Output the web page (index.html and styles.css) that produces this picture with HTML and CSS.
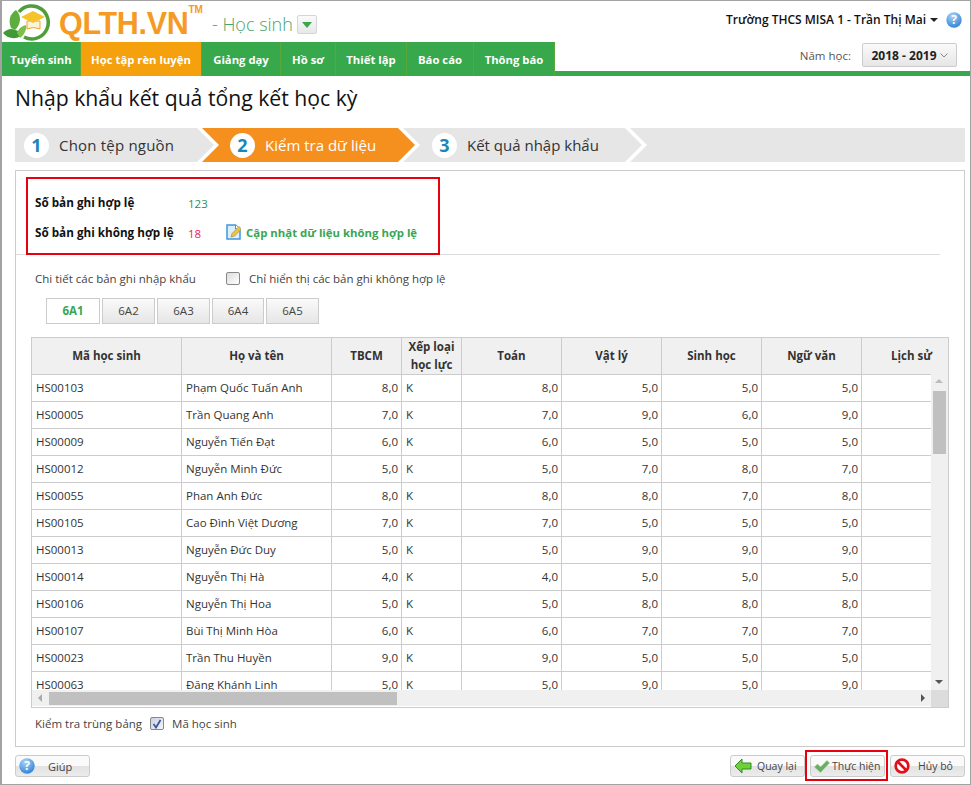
FILE: index.html
```html
<!DOCTYPE html>
<html lang="vi">
<head>
<meta charset="utf-8">
<title>Nhập khẩu kết quả tổng kết học kỳ</title>
<link rel="stylesheet" href="styles.css">
</head>
<body>
<div class="frame">
  <header class="top">
    <div class="brand">
      <svg class="logo" viewBox="0 0 52 40" width="52" height="40">
        <path d="M17 10 A16.500 16.500 0 1 1 22 35" fill="none" stroke="#4f9e3a" stroke-width="3.500"/>
        <path d="M25 19 H38 V27 Q31.500 24 25 27Z" fill="#fdf3d8" stroke="#eaa52a"/>
        <polygon points="31,9 43,15 31,21 19,15" fill="#f5c42a"/>
        <path d="M1 31 C7 25 14 26 20 33 C14 38 6 37 1 31Z" fill="#3f9a35"/>
        <path d="M9 26 C6 18 8 12 14 8 C20 14 19 22 13 28Z" fill="#5dae3e"/>
        <path d="M15 31 C17 26 20 24 24 23 C25 28 22 33 18 36Z" fill="#7cc04b"/>
      </svg>
      <span class="brand-name">QLTH.VN</span><sup class="brand-tm">TM</sup>
      <span class="module">- Học sinh</span>
      <span class="module-btn"><span class="tri-green"></span></span>
    </div>
    <div class="user">
      <span>Trường THCS MISA 1 - Trần Thị Mai</span>
      <span class="caret"></span>
      <svg class="help" viewBox="0 0 16 16" width="16" height="16"><defs><radialGradient id="hg" cx="40%" cy="25%" r="80%"><stop offset="0" stop-color="#a9d4f7"/><stop offset="1" stop-color="#2f7fd6"/></radialGradient></defs><circle cx="8" cy="8" r="7.700" fill="url(#hg)"/><text x="8" y="12" text-anchor="middle" class="help-q">?</text></svg>
    </div>
  </header>
  <nav class="nav">
    <div class="tabs">
      <a class="tab">Tuyển sinh</a>
      <a class="tab tab-active">Học tập rèn luyện</a>
      <a class="tab">Giảng dạy</a>
      <a class="tab">Hồ sơ</a>
      <a class="tab">Thiết lập</a>
      <a class="tab">Báo cáo</a>
      <a class="tab">Thông báo</a>
    </div>
    <div class="year">
      <span class="year-label">Năm học:</span>
      <span class="year-btn">2018 - 2019 <svg viewBox="0 0 8 5" width="8" height="5"><path d="M.5.5 4 4 7.500.5" fill="none" stroke="#888"/></svg></span>
    </div>
  </nav>
  <h1 class="title">Nhập khẩu kết quả tổng kết học kỳ</h1>
  <div class="steps">
    <div class="step step-1"><b class="num">1</b>Chọn tệp nguồn</div>
    <div class="step step-2"><b class="num">2</b>Kiểm tra dữ liệu</div>
    <div class="step step-3"><b class="num">3</b>Kết quả nhập khẩu</div>
    <div class="step step-4"></div>
  </div>
  <main class="panel">
    <div class="summary-wrap">
      <div class="summary">
        <div class="sum-row"><b class="sum-label">Số bản ghi hợp lệ</b><span class="ok">123</span></div>
        <div class="sum-row"><b class="sum-label">Số bản ghi không hợp lệ</b><span class="bad">18</span>
          <svg class="edit" viewBox="0 0 15 16" width="15" height="16"><path d="M1 1H9.500L14 5V15H1Z" fill="#dcedfb" stroke="#3f97e0" stroke-width="1.500"/><path d="M9.500 1V5H14" fill="#fff" stroke="#3f97e0"/><path d="M5 13 6 9.500 13 2.500 15.500 5 8.500 12Z" fill="#eec543" stroke="#a97f1d" stroke-width=".6"/></svg>
          <b class="link">Cập nhật dữ liệu không hợp lệ</b></div>
      </div>
    </div>
    <div class="detail">
      <span class="detail-label">Chi tiết các bản ghi nhập khẩu</span>
      <span class="check"></span>
      <span class="detail-opt">Chỉ hiển thị các bản ghi không hợp lệ</span>
    </div>
    <div class="classes">
      <a class="cls cls-active">6A1</a><a class="cls">6A2</a><a class="cls">6A3</a><a class="cls">6A4</a><a class="cls">6A5</a>
    </div>
    <div class="grid">
      <table>
        <colgroup><col class="c-id"><col class="c-name"><col class="c-avg"><col class="c-rank"><col class="c-sub"><col class="c-sub"><col class="c-sub"><col class="c-sub"><col class="c-sub"></colgroup>
        <thead><tr><th>Mã học sinh</th><th>Họ và tên</th><th>TBCM</th><th>Xếp loại<br>học lực</th><th>Toán</th><th>Vật lý</th><th>Sinh học</th><th>Ngữ văn</th><th>Lịch sử</th></tr></thead>
        <tbody>
          <tr><td>HS00103</td><td>Phạm Quốc Tuấn Anh</td><td class="n">8,0</td><td>K</td><td class="n">8,0</td><td class="n">5,0</td><td class="n">5,0</td><td class="n">5,0</td><td></td></tr>
          <tr><td>HS00005</td><td>Trần Quang Anh</td><td class="n">7,0</td><td>K</td><td class="n">7,0</td><td class="n">9,0</td><td class="n">6,0</td><td class="n">9,0</td><td></td></tr>
          <tr><td>HS00009</td><td>Nguyễn Tiến Đạt</td><td class="n">6,0</td><td>K</td><td class="n">6,0</td><td class="n">5,0</td><td class="n">5,0</td><td class="n">5,0</td><td></td></tr>
          <tr><td>HS00012</td><td>Nguyễn Minh Đức</td><td class="n">5,0</td><td>K</td><td class="n">5,0</td><td class="n">7,0</td><td class="n">8,0</td><td class="n">7,0</td><td></td></tr>
          <tr><td>HS00055</td><td>Phan Anh Đức</td><td class="n">8,0</td><td>K</td><td class="n">8,0</td><td class="n">8,0</td><td class="n">7,0</td><td class="n">8,0</td><td></td></tr>
          <tr><td>HS00105</td><td>Cao Đình Việt Dương</td><td class="n">7,0</td><td>K</td><td class="n">7,0</td><td class="n">5,0</td><td class="n">5,0</td><td class="n">5,0</td><td></td></tr>
          <tr><td>HS00013</td><td>Nguyễn Đức Duy</td><td class="n">5,0</td><td>K</td><td class="n">5,0</td><td class="n">9,0</td><td class="n">9,0</td><td class="n">9,0</td><td></td></tr>
          <tr><td>HS00014</td><td>Nguyễn Thị Hà</td><td class="n">4,0</td><td>K</td><td class="n">4,0</td><td class="n">5,0</td><td class="n">5,0</td><td class="n">5,0</td><td></td></tr>
          <tr><td>HS00106</td><td>Nguyễn Thị Hoa</td><td class="n">5,0</td><td>K</td><td class="n">5,0</td><td class="n">8,0</td><td class="n">8,0</td><td class="n">8,0</td><td></td></tr>
          <tr><td>HS00107</td><td>Bùi Thị Minh Hòa</td><td class="n">6,0</td><td>K</td><td class="n">6,0</td><td class="n">7,0</td><td class="n">7,0</td><td class="n">7,0</td><td></td></tr>
          <tr><td>HS00023</td><td>Trần Thu Huyền</td><td class="n">9,0</td><td>K</td><td class="n">9,0</td><td class="n">5,0</td><td class="n">5,0</td><td class="n">5,0</td><td></td></tr>
          <tr><td>HS00063</td><td>Đặng Khánh Linh</td><td class="n">5,0</td><td>K</td><td class="n">5,0</td><td class="n">9,0</td><td class="n">5,0</td><td class="n">9,0</td><td></td></tr>
        </tbody>
      </table>
      <div class="vbar"><span class="arr arr-up"></span><span class="vthumb"></span><span class="arr arr-down"></span></div>
      <div class="hbar"><span class="arr arr-left"></span><span class="hthumb"></span><span class="arr arr-right"></span></div>
      <div class="corner"></div>
    </div>
    <div class="dupes">
      <span>Kiểm tra trùng bảng</span>
      <span class="check check-on"><svg viewBox="0 0 10 10" width="10" height="10"><path d="M1.500 5 4 8.500 8.500 1" fill="none" stroke="#3b5a9a" stroke-width="1.800"/></svg></span>
      <span>Mã học sinh</span>
    </div>
  </main>
  <footer class="actions">
    <button class="btn btn-help"><svg viewBox="0 0 16 16" width="16" height="16"><circle cx="8" cy="8" r="7.700" fill="url(#hg)"/><text x="8" y="12" text-anchor="middle" class="help-q">?</text></svg><span>Giúp</span></button>
    <div class="actions-right">
      <button class="btn btn-back"><svg viewBox="0 0 18 16" width="18" height="16"><path d="M8 1 1 8 8 15V11H17V5H8Z" fill="#6fd03c" stroke="#2f8f1e"/></svg><span>Quay lại</span></button>
      <div class="focus"><button class="btn btn-go"><svg viewBox="0 0 16 13" width="16" height="13"><path d="M.5 7 3.500 4 6.500 7 13 .5 15.500 3 6.500 12.500Z" fill="#69ae62" stroke="#9ccb96" stroke-width=".5"/></svg><span>Thực hiện</span></button></div>
      <button class="btn btn-cancel"><svg viewBox="0 0 16 16" width="16" height="16"><circle cx="8" cy="8" r="6.300" fill="#fff" stroke="#e0101a" stroke-width="2.700"/><path d="M3.500 3.500 12.500 12.500" stroke="#e0101a" stroke-width="2.700"/></svg><span>Hủy bỏ</span></button>
    </div>
  </footer>
</div>
</body>
</html>
```
FILE: styles.css
```css
* { box-sizing: border-box; }
html, body { margin: 0; padding: 0; background: #fff; }
body { font-family: "Open Sans", "Noto Sans", sans-serif; font-size: 11.500px; color: #222; }
button { font: inherit; }
a { display: block; }

.frame {
  width: 971px; height: 785px; overflow: hidden;
  border: solid #a3a3a3; border-width: 1px 1px 1px 2px;
  display: flex; flex-direction: column;
}

/* header */
.top { height: 41px; display: flex; justify-content: space-between; align-items: flex-start; flex: none; }
.brand { display: flex; align-items: flex-start; height: 41px; }
.logo { margin-top: 1px; flex: none; }
.brand-name { font-family: "Liberation Sans", sans-serif; font-weight: 700; font-size: 30.500px; line-height: 40px; color: #f59a23; margin: 2px 0 0 5px; letter-spacing: -.3px; }
.brand-tm { font-family: "Liberation Sans", sans-serif; font-weight: 700; font-size: 10px; line-height: 12px; color: #f59a23; margin: 3px 0 0 0; vertical-align: baseline; }
.module { font-size: 18px; color: #4aa56a; margin: 11px 0 0 9px; line-height: 24px; font-family: "Open Sans", sans-serif; font-weight: 300; }
.module-btn { width: 20px; height: 19px; margin: 14px 0 0 4px; border: 1px solid #d5d5d5; border-radius: 2px; background: linear-gradient(#fafafa, #e8e8e8); display: flex; align-items: center; justify-content: center; }
.tri-green { width: 0; height: 0; border: 5px solid transparent; border-top: 6px solid #39a84c; border-bottom: 0; }
.user { display: flex; align-items: center; height: 17px; margin: 10px 8px 0 0; color: #111; font-weight: 600; font-size: 12px; }
.caret { width: 0; height: 0; border: 4px solid transparent; border-top: 4px solid #222; border-bottom: 0; margin-left: 4px; }
.help { margin-left: 8px; }
.help-q { font-size: 12px; font-weight: 700; fill: #fff; }

/* nav */
.nav { height: 34px; flex: none; display: flex; justify-content: space-between; border-bottom: 5px solid #37a84c; }
.tabs { display: flex; height: 34px; }
.tab { height: 34px; line-height: 35px; text-align: center; background: #37a84c; color: #fff; font-weight: 700; font-size: 11.300px; border-right: 1px solid #5aa83a; white-space: nowrap; }
.tab:nth-child(1) { width: 79px; }
.tab:nth-child(2) { width: 121px; }
.tab:nth-child(3) { width: 79px; }
.tab:nth-child(4) { width: 55px; }
.tab:nth-child(5) { width: 71px; }
.tab:nth-child(6) { width: 67px; }
.tab:nth-child(7) { width: 81px; }
.tab-active { background: #f5a00d; }
.year { display: flex; align-items: flex-start; height: 29px; margin-right: 13px; }
.year-label { line-height: 28px; color: #555; margin-right: 11px; }
.year-btn { margin-top: 1px; height: 24px; width: 95px; border: 1px solid #ccc; border-radius: 2px; background: linear-gradient(#fafafa, #e6e6e6); font-weight: 700; color: #222; font-size: 12px; display: flex; align-items: center; justify-content: center; gap: 3px; }

/* title */
.title { margin: 0; height: 52px; padding: 7px 0 0 13px; font-weight: 400; font-size: 21.200px; line-height: 30px; color: #111; flex: none; }

/* steps */
.steps { display: flex; height: 34px; margin-left: 13px; width: 950px; flex: none; font-size: 15px; color: #333; }
.step { height: 34px; background: #e6e6e6; display: flex; align-items: center; flex: none; }
.step-1 { width: 199px; padding-left: 9px; letter-spacing: .2px; clip-path: polygon(0 0, calc(100% - 17px) 0, 100% 50%, calc(100% - 17px) 100%, 0 100%); }
.step-2 { width: 213px; margin-left: -12px; padding-left: 28px; background: #f5901e; color: #fff; clip-path: polygon(0 0, calc(100% - 17px) 0, 100% 50%, calc(100% - 17px) 100%, 0 100%, 17px 50%); }
.step-3 { width: 239px; margin-left: -12px; padding-left: 29px; clip-path: polygon(0 0, calc(100% - 17px) 0, 100% 50%, calc(100% - 17px) 100%, 0 100%, 17px 50%); }
.step-4 { flex: 1; margin-left: -12px; clip-path: polygon(0 0, 100% 0, 100% 100%, 0 100%, 17px 50%); }
.num { width: 25px; height: 25px; border-radius: 50%; background: #fff; color: #1b86b8; font-size: 18px; line-height: 25px; text-align: center; margin-right: 10px; flex: none; letter-spacing: 0; }

/* panel */
.panel { margin: 8px 0 0 13px; width: 950px; height: 577px; border: 1px solid #ccc; flex: none; padding-top: 6px; }
.summary-wrap { margin-right: 24px; border-bottom: 1px solid #ddd; height: 78px; }
.summary { margin-left: 10px; width: 414px; height: 78px; border: 2px solid #e8000e; padding-top: 8px; }
.sum-row { display: flex; align-items: center; height: 30px; padding-left: 7px; }
.sum-label { width: 153px; color: #111; flex: none; font-size: 11.700px; }
.ok { color: #2f8f55; margin-top: 2px; }
.bad { color: #f0185a; margin-top: 2px; }
.edit { margin-left: 25px; margin-right: 5px; flex: none; }
.sum-row .bad { width: 13px; }
.link { color: #3aa655; font-size: 11.400px; }
.detail { display: flex; align-items: center; height: 17px; margin-top: 15px; padding-left: 19px; }
.detail-label { width: 191px; color: #444; }
.detail-opt { margin-left: 9px; color: #444; }
.check { width: 14px; height: 13px; border: 1px solid #888; border-radius: 2px; background: linear-gradient(135deg, #ddd, #fff); display: inline-flex; align-items: center; justify-content: center; flex: none; }
.check-on { background: linear-gradient(135deg, #c8d0e4, #f4f6fb); }
.classes { display: flex; gap: 2px; margin: 11px 0 0 30px; }
.cls { width: 53px; height: 26px; line-height: 24px; text-align: center; border: 1px solid #ccc; background: linear-gradient(#fafafa, #e6e6e6); color: #444; }
.cls:nth-child(4) { width: 52px; }
.cls-active { width: 54px; background: #fff; color: #3aa655; font-weight: 700; }

/* grid */
.grid { position: relative; margin: 13px 0 0 15px; width: 918px; height: 371px; border: 1px solid #ccc; overflow: hidden; }
table { border-collapse: separate; border-spacing: 0; table-layout: fixed; width: 930px; }
.c-id, .c-name { width: 150px; }
.c-avg { width: 70px; }
.c-rank { width: 60px; }
.c-sub { width: 100px; }
th { height: 35px; background: #f0f0f0; color: #333; font-weight: 700; line-height: 18px; text-align: center; padding: 0; border-right: 1px solid #ccc; border-bottom: 1px solid #ccc; }
td { height: 27px; padding: 0 3px 2px 4px; border-right: 1px solid #ccc; border-bottom: 1px solid #ccc; color: #333; white-space: nowrap; }
.n { text-align: right; }
.vbar { position: absolute; top: 35px; right: 0; bottom: 0; width: 17px; background: #f0f0f0; }
.vthumb { position: absolute; left: 2px; top: 18px; width: 13px; height: 63px; background: #c0c0c0; }
.hbar { position: absolute; left: 0; right: 17px; bottom: 1px; height: 16px; background: #f0f0f0; }
.hthumb { position: absolute; left: 17px; top: 2px; width: 348px; height: 13px; background: #c0c0c0; }
.corner { position: absolute; right: 0; bottom: 0; width: 17px; height: 17px; background: #dcdcdc; }
.arr { position: absolute; width: 0; height: 0; border: 4px solid transparent; }
.arr-up { left: 4px; top: 6px; border-top: 0; border-bottom: 4px solid #bbb; }
.arr-down { left: 4px; bottom: 23px; border-bottom: 0; border-top: 4px solid #555; }
.arr-left { left: 6px; top: 4px; border-left: 0; border-right: 4px solid #aaa; }
.arr-right { right: 6px; top: 4px; border-right: 0; border-left: 4px solid #555; }
.dupes { display: flex; align-items: center; gap: 8px; height: 17px; margin: 7px 0 0 19px; color: #444; }

/* footer */
.actions { display: flex; justify-content: space-between; margin: 8px 0 0 13px; width: 950px; height: 22px; flex: none; }
.actions-right { display: flex; align-items: center; }
.btn { width: 75px; height: 22px; padding: 0 0 0 3px; border: 1px solid #ccc; border-radius: 3px; background: linear-gradient(#fafafa 0 50%, #e2e2e2 50%, #ececec); display: flex; align-items: center; gap: 5px; color: #444; font-size: 10.500px; white-space: nowrap; flex: none; }
.btn svg { flex: none; }
.btn-help { gap: 13px; font-size: 11px; }
.btn-go { gap: 2px; }
.btn-cancel { gap: 8px; }
.focus { border: 2px solid #e8000e; padding: 3px 1px 3px 3px; margin: -5px 2px -4px 0; height: 31px; display: flex; }
```
